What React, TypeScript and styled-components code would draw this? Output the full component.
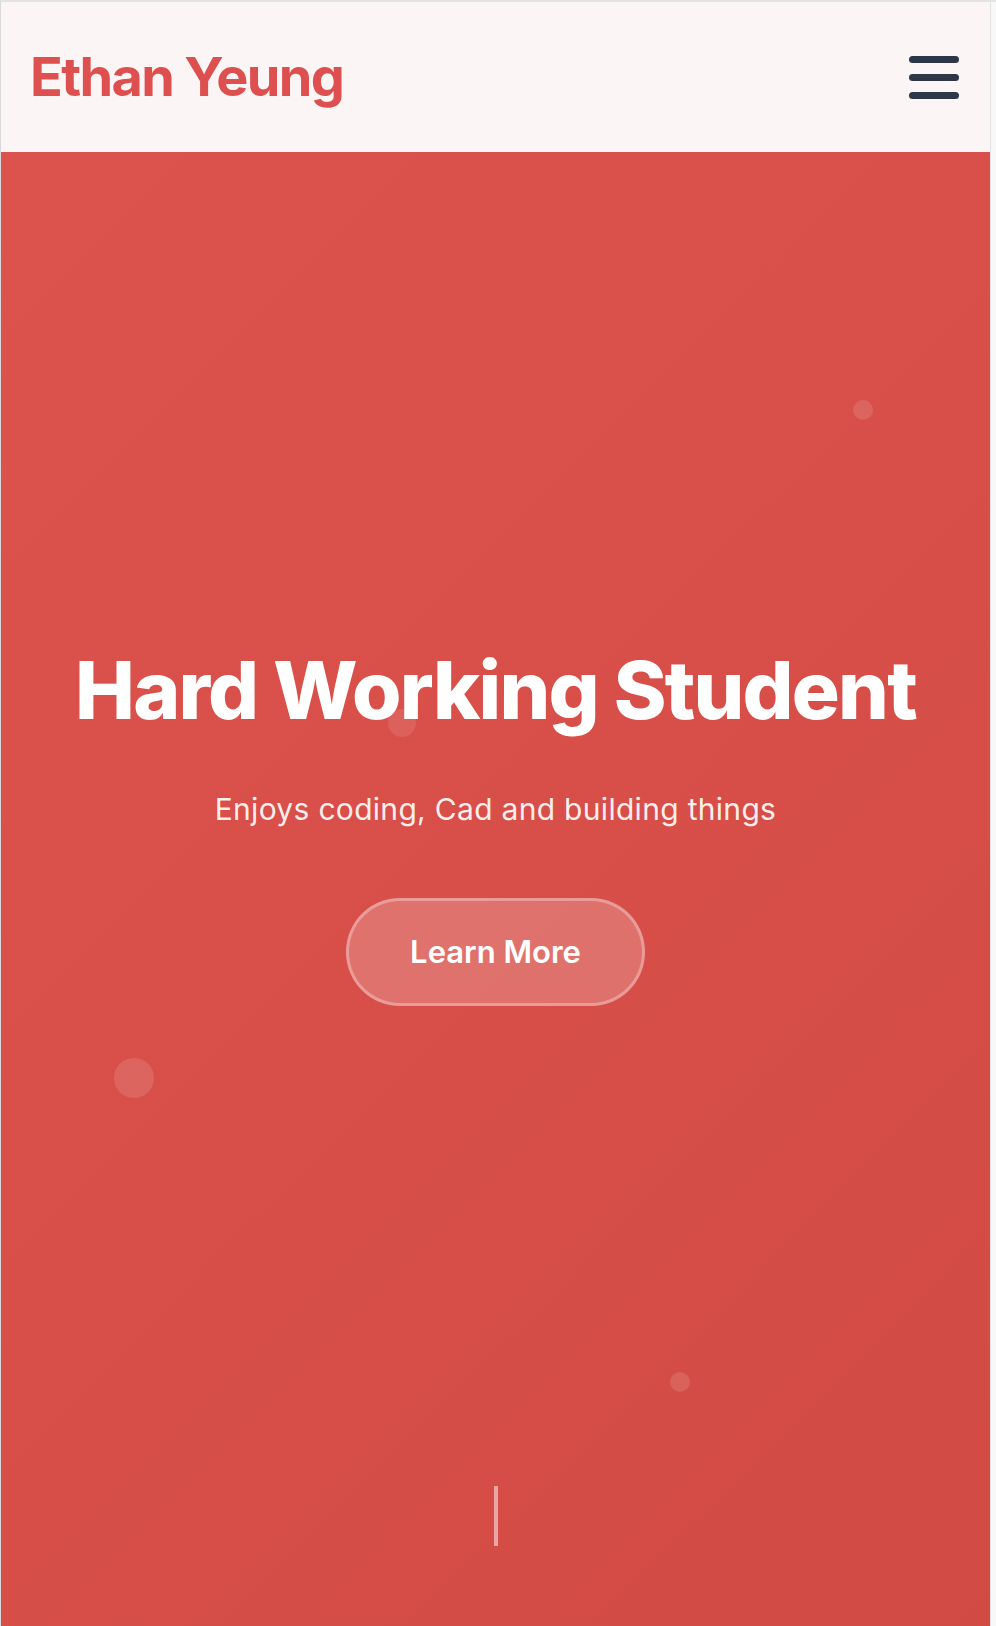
import React from "react";
import styled, { createGlobalStyle } from "styled-components";

const GlobalStyle = createGlobalStyle`
  html, body {
    margin: 0;
    padding: 0;
    background: #ffffff;
  }
  body {
    font-family: Inter, "Noto Sans", "Liberation Sans", sans-serif;
    -webkit-font-smoothing: antialiased;
  }
  * { box-sizing: border-box; }
`;

const Frame = styled.div`
  display: flex;
  min-height: 100vh;
  border-top: 2px solid #e3e3e5;
  border-left: 1px solid #d9d9dc;
`;

const Page = styled.div`
  flex: 1;
  display: flex;
  flex-direction: column;
  min-width: 0;
`;

const ScrollGutter = styled.div`
  width: 6px;
  flex: none;
  background: #f8f8f8;
  border-left: 1px solid #e2e2e4;
`;

const Header = styled.header`
  height: 150px;
  flex: none;
  display: flex;
  align-items: center;
  justify-content: space-between;
  padding: 0 31px 0 29px;
  background: #fcf5f5;
`;

const Logo = styled.a`
  font-size: 54px;
  font-weight: 700;
  letter-spacing: -0.03em;
  color: #de4f4f;
  text-decoration: none;
  line-height: 1;
`;

const MenuButton = styled.button`
  display: flex;
  flex-direction: column;
  gap: 11px;
  padding: 0;
  border: none;
  background: transparent;
  cursor: pointer;
`;

const MenuBar = styled.span`
  display: block;
  width: 50px;
  height: 7px;
  border-radius: 4px;
  background: #2d3748;
`;

const Hero = styled.section`
  position: relative;
  flex: 1;
  overflow: hidden;
  display: flex;
  flex-direction: column;
  align-items: center;
  padding-top: 494px;
  background: linear-gradient(135deg, #dc524c 0%, #d84f49 50%, #d24a44 100%);
  color: #ffffff;
  text-align: center;
`;

const Title = styled.h1`
  margin: 0;
  font-size: 80px;
  line-height: 88px;
  font-weight: 800;
  letter-spacing: -0.022em;
  position: relative;
  z-index: 1;
`;

const Subtitle = styled.p`
  margin: 54px 0 0;
  font-size: 30px;
  line-height: 42px;
  font-weight: 400;
  letter-spacing: 0.01em;
  color: rgba(255, 255, 255, 0.92);
  position: relative;
  z-index: 1;
`;

const CtaButton = styled.a`
  margin-top: 68px;
  display: inline-block;
  padding: 33px 61px;
  font-size: 31px;
  line-height: 36px;
  font-weight: 600;
  color: #ffffff;
  text-decoration: none;
  border-radius: 999px;
  background: rgba(255, 255, 255, 0.2);
  border: 3px solid rgba(255, 255, 255, 0.3);
  position: relative;
  z-index: 1;
`;

const Particle = styled.span<{ $x: number; $y: number; $size: number; $opacity?: number }>`
  position: absolute;
  left: ${(p) => p.$x - p.$size / 2}px;
  top: ${(p) => p.$y - p.$size / 2}px;
  width: ${(p) => p.$size}px;
  height: ${(p) => p.$size}px;
  border-radius: 50%;
  background: rgba(255, 255, 255, ${(p) => p.$opacity ?? 0.12});
`;

const ScrollLine = styled.span`
  position: absolute;
  left: 50%;
  bottom: 80px;
  width: 4px;
  height: 60px;
  margin-left: -2px;
  background: rgba(255, 255, 255, 0.5);
`;

const particles = [
  { x: 862, y: 258, size: 20 },
  { x: 401, y: 571, size: 28, opacity: 0.1 },
  { x: 133, y: 926, size: 40 },
  { x: 679, y: 1230, size: 20 },
];

export default function App() {
  return (
    <>
      <GlobalStyle />
      <Frame>
        <Page>
          <Header>
            <Logo href="#">Ethan Yeung</Logo>
            <MenuButton aria-label="Open menu">
              <MenuBar />
              <MenuBar />
              <MenuBar />
            </MenuButton>
          </Header>
          <Hero>
            {particles.map((p, i) => (
              <Particle key={i} $x={p.x} $y={p.y} $size={p.size} $opacity={p.opacity} />
            ))}
            <Title>Hard Working Student</Title>
            <Subtitle>Enjoys coding, Cad and building things</Subtitle>
            <CtaButton href="#">Learn More</CtaButton>
            <ScrollLine />
          </Hero>
        </Page>
        <ScrollGutter />
      </Frame>
    </>
  );
}
